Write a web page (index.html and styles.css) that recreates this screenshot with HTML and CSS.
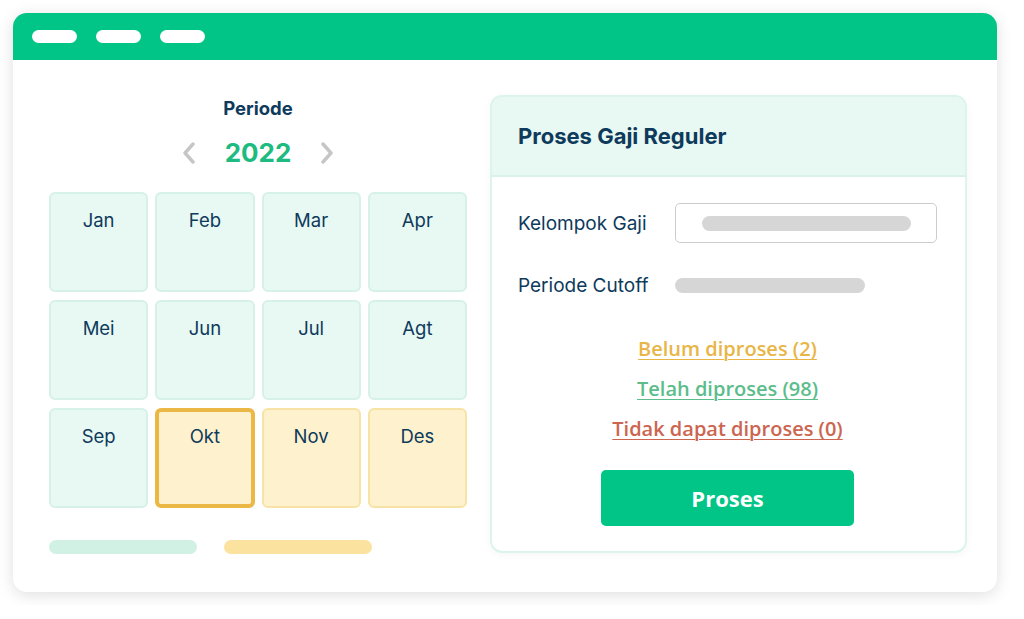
FILE: index.html
```html
<!DOCTYPE html>
<html lang="id">
<head>
    <meta charset="UTF-8">
    <meta name="viewport" content="width=device-width, initial-scale=1.0">
    <title>Proses Gaji Reguler</title>
    <link rel="stylesheet" href="styles.css">
</head>
<body>
    <div class="window">
        <!-- bar atas -->
        <div class="window-bar">
            <span class="dot"></span>
            <span class="dot"></span>
            <span class="dot"></span>
        </div>

        <div class="window-body">
            <!-- kalender periode -->
            <div class="period">
                <div class="period-title">Periode</div>
                <div class="year-row">
                    <svg class="chevron" width="14" height="22" viewBox="0 0 14 22"><path d="M11 2 L3 11 L11 20" fill="none" stroke="#c6c6c6" stroke-width="3.4" stroke-linecap="round" stroke-linejoin="round"/></svg>
                    <span class="year">2022</span>
                    <svg class="chevron" width="14" height="22" viewBox="0 0 14 22"><path d="M3 2 L11 11 L3 20" fill="none" stroke="#c6c6c6" stroke-width="3.4" stroke-linecap="round" stroke-linejoin="round"/></svg>
                </div>
                <div class="month-grid">
                    <div class="month">Jan</div>
                    <div class="month">Feb</div>
                    <div class="month">Mar</div>
                    <div class="month">Apr</div>
                    <div class="month">Mei</div>
                    <div class="month">Jun</div>
                    <div class="month">Jul</div>
                    <div class="month">Agt</div>
                    <div class="month">Sep</div>
                    <div class="month month-pending month-active">Okt</div>
                    <div class="month month-pending">Nov</div>
                    <div class="month month-pending">Des</div>
                </div>
                <div class="legend">
                    <span class="legend-bar legend-done"></span>
                    <span class="legend-bar legend-pending"></span>
                </div>
            </div>

            <!-- kartu proses -->
            <div class="card">
                <div class="card-header">Proses Gaji Reguler</div>
                <div class="card-body">
                    <div class="field-row">
                        <div class="field-label">Kelompok Gaji</div>
                        <div class="select-box"><span class="placeholder placeholder-wide"></span></div>
                    </div>
                    <div class="field-row">
                        <div class="field-label">Periode Cutoff</div>
                        <span class="placeholder placeholder-cutoff"></span>
                    </div>
                    <div class="status-list">
                        <a class="status status-pending" href="#">Belum diproses (2)</a>
                        <a class="status status-done" href="#">Telah diproses (98)</a>
                        <a class="status status-failed" href="#">Tidak dapat diproses (0)</a>
                    </div>
                    <button class="process-button">Proses</button>
                </div>
            </div>
        </div>
    </div>
</body>
</html>
```

FILE: styles.css
```css
body {
    margin: 0;
    padding: 13px;
    background-color: #ffffff;
    font-family: Inter, "Noto Sans", sans-serif;
    color: #0e3a5b;
}

.window {
    width: 984px;
    height: 579px;
    background-color: #ffffff;
    border-radius: 14px;
    box-shadow: 0 3px 16px rgba(0, 0, 0, 0.13);
    overflow: hidden;
}

.window-bar {
    height: 47px;
    background-color: #00c586;
    display: flex;
    align-items: center;
    gap: 19px;
    padding-left: 19px;
}

.dot {
    width: 45px;
    height: 13px;
    border-radius: 7px;
    background-color: #ffffff;
}

.window-body {
    display: flex;
    padding: 35px 30px 0 36px;
    gap: 23px;
}

/* kalender */
.period {
    width: 418px;
    display: flex;
    flex-direction: column;
    align-items: center;
}

.period-title {
    margin-top: 3px;
    font-size: 18.5px;
    line-height: 20px;
    font-weight: 700;
}

.year-row {
    margin-top: 19px;
    display: flex;
    align-items: center;
    gap: 29px;
    height: 32px;
}

.year {
    font-size: 26px;
    line-height: 32px;
    font-weight: 700;
    color: #1dbb80;
}

.month-grid {
    margin-top: 23px;
    width: 100%;
    display: grid;
    grid-template-columns: repeat(4, 1fr);
    grid-auto-rows: 100px;
    column-gap: 7px;
    row-gap: 8px;
}

.month {
    box-sizing: border-box;
    border: 2px solid #d5f1e8;
    border-radius: 6px;
    background-color: #e8f8f3;
    text-align: center;
    padding-top: 16px;
    font-size: 18.5px;
    line-height: 20px;
}

.month-pending {
    background-color: #fdf2cd;
    border-color: #f8e3a6;
}

.month-active {
    border: 4px solid #ecb845;
    padding-top: 14px;
}

.legend {
    margin-top: 32px;
    width: 100%;
    display: flex;
    gap: 27px;
}

.legend-bar {
    width: 148px;
    height: 14px;
    border-radius: 7px;
}

.legend-done {
    background-color: #d0f1e4;
}

.legend-pending {
    background-color: #fbe29f;
}

/* kartu */
.card {
    width: 477px;
    height: 458px;
    box-sizing: border-box;
    border: 2px solid #dcf4ec;
    border-radius: 12px;
    overflow: hidden;
    box-shadow: 0 2px 8px rgba(0, 0, 0, 0.04);
}

.card-header {
    height: 78px;
    background-color: #e8f8f3;
    border-bottom: 2px solid #d8f2ea;
    padding-left: 26px;
    display: flex;
    align-items: center;
    font-size: 22px;
    font-weight: 700;
}

.card-body {
    padding: 26px 28px 0 26px;
    display: flex;
    flex-direction: column;
}

.field-row {
    display: flex;
    align-items: center;
    height: 40px;
    margin-bottom: 22px;
}

.field-label {
    width: 157px;
    font-size: 19px;
}

.select-box {
    box-sizing: border-box;
    width: 263px;
    height: 40px;
    border: 1.5px solid #cccccc;
    border-radius: 5px;
    display: flex;
    align-items: center;
    padding-left: 26px;
}

.placeholder {
    display: block;
    height: 15px;
    border-radius: 8px;
    background-color: #d6d6d6;
}

.placeholder-wide {
    width: 209px;
}

.placeholder-cutoff {
    width: 190px;
}

.status-list {
    margin-top: 9px;
    display: flex;
    flex-direction: column;
    align-items: center;
    gap: 14px;
}

.status {
    font-family: "Open Sans", sans-serif;
    font-size: 20px;
    line-height: 26px;
    font-weight: 600;
    text-decoration: underline;
    text-decoration-thickness: 1px;
    text-underline-offset: 3px;
}

.status-pending {
    color: #e8b647;
}

.status-done {
    color: #5cbd8b;
}

.status-failed {
    color: #cc6651;
}

.process-button {
    margin: 28px auto 0;
    width: 253px;
    height: 56px;
    border: none;
    border-radius: 5px;
    background-color: #00c586;
    color: #ffffff;
    font-family: "Open Sans", sans-serif;
    font-size: 22px;
    font-weight: 700;
    cursor: pointer;
}
```
